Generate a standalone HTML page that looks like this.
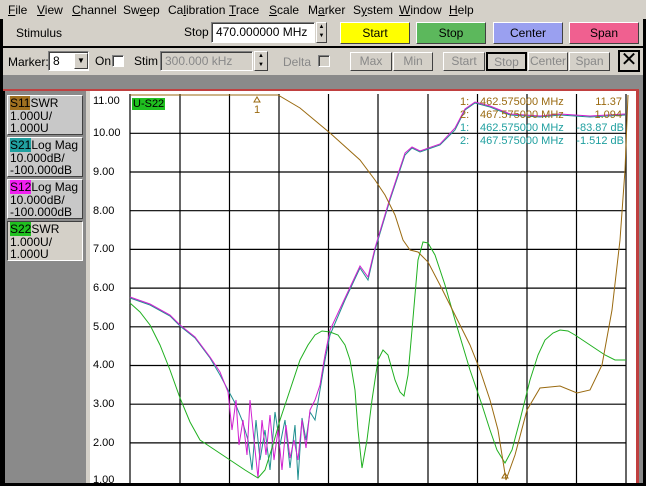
<!DOCTYPE html>
<html><head><style>
*{margin:0;padding:0;box-sizing:border-box}
body{width:646px;height:486px;background:#000;position:relative;overflow:hidden;font-family:"Liberation Sans",sans-serif;font-size:12px;color:#000}
.a{position:absolute}
.menu{left:0;top:0;width:646px;height:19px;background:#d4d0c8}
.menu span{position:absolute;top:3px}
.btn{position:absolute;border:1px solid;border-color:#fff #404040 #404040 #fff;text-align:center;font-size:12px}
.dis{color:#888}
.inp{position:absolute;background:#fff;border:1px solid;border-color:#808080 #fff #fff #808080;box-shadow:inset 1px 1px 0 #404040}
.lbl{position:absolute;width:76px;height:40px;background:#c8c8c8;border:1px solid;border-color:#fff #404040 #404040 #fff;font-size:12px;line-height:12.5px;padding:1px 0 0 2px;white-space:nowrap}
.yl{position:absolute;left:93px;font-size:11px}
.rd{position:absolute;font-size:11px;line-height:13px}
</style></head><body>
<div class="a menu">
<span style="left:8px"><u>F</u>ile</span><span style="left:37px"><u>V</u>iew</span><span style="left:72px"><u>C</u>hannel</span><span style="left:123px">Sw<u>e</u>ep</span><span style="left:168px">Ca<u>l</u>ibration</span><span style="left:229px"><u>T</u>race</span><span style="left:269px"><u>S</u>cale</span><span style="left:308px">M<u>a</u>rker</span><span style="left:353px">S<u>y</u>stem</span><span style="left:399px"><u>W</u>indow</span><span style="left:449px"><u>H</u>elp</span>
</div>
<div class="a" style="left:3px;top:19px;width:640px;height:27px;background:#d4d0c8"></div>
<div class="a" style="left:16px;top:26px">Stimulus</div>
<div class="a" style="left:184px;top:25px">Stop</div>
<div class="inp" style="left:211px;top:22px;width:104px;height:21px;padding:2px 4px">470.000000 MHz</div>
<div class="btn" style="left:316px;top:22px;width:11px;height:21px;font-size:6px;line-height:9px">▲<br>▼</div>
<div class="btn" style="left:340px;top:22px;width:70px;height:22px;background:#ffff00;line-height:20px">Start</div>
<div class="btn" style="left:416px;top:22px;width:70px;height:22px;background:#5cb85c;line-height:20px">Stop</div>
<div class="btn" style="left:493px;top:22px;width:70px;height:22px;background:#9aa0f0;line-height:20px">Center</div>
<div class="btn" style="left:569px;top:22px;width:70px;height:22px;background:#f06090;line-height:20px">Span</div>
<div class="a" style="left:3px;top:48px;width:640px;height:27px;background:#d4d0c8"></div>
<div class="a" style="left:8px;top:55px">Marker:</div>
<div class="inp" style="left:48px;top:51px;width:41px;height:20px;padding:2px 4px">8</div>
<div class="btn" style="left:74px;top:53px;width:14px;height:16px;font-size:8px;line-height:14px;background:#d4d0c8">▼</div>
<div class="a" style="left:95px;top:54px">On</div>
<div class="inp" style="left:112px;top:55px;width:12px;height:12px"></div>
<div class="a" style="left:134px;top:54px">Stim</div>
<div class="inp dis" style="left:160px;top:51px;width:93px;height:20px;padding:2px 4px;background:#d4d0c8">300.000 kHz</div>
<div class="btn" style="left:254px;top:51px;width:14px;height:20px;font-size:6px;line-height:9px;background:#d4d0c8">▲<br>▼</div>
<div class="a dis" style="left:283px;top:55px">Delta</div>
<div class="inp" style="left:318px;top:55px;width:12px;height:12px;background:#d4d0c8"></div>
<div class="btn dis" style="left:350px;top:52px;width:42px;height:19px;background:#d4d0c8;line-height:17px">Max</div>
<div class="btn dis" style="left:393px;top:52px;width:40px;height:19px;background:#d4d0c8;line-height:17px">Min</div>
<div class="btn dis" style="left:443px;top:52px;width:42px;height:19px;background:#d4d0c8;line-height:17px">Start</div>
<div class="btn dis" style="left:486px;top:52px;width:41px;height:19px;background:#d4d0c8;line-height:17px;border:2px solid #000">Stop</div>
<div class="btn dis" style="left:528px;top:52px;width:40px;height:19px;background:#d4d0c8;line-height:17px">Center</div>
<div class="btn dis" style="left:569px;top:52px;width:41px;height:19px;background:#d4d0c8;line-height:17px">Span</div>
<div class="a" style="left:618px;top:50px;width:22px;height:22px;border:2px solid #000;background:#d4d0c8;font-size:20px;line-height:17px;text-align:center">✕</div>
<div class="a" style="left:3px;top:75px;width:640px;height:14px;background:#8a8a8a"></div>
<div class="a" style="left:3px;top:89px;width:637px;height:2px;background:#c04040"></div>
<div class="a" style="left:5px;top:91px;width:82px;height:392px;background:#8a8a8a"></div>
<div class="a" style="left:86px;top:91px;width:4px;height:392px;background:#d4d0c8"></div>
<div class="lbl" style="left:7px;top:95px"><span style="background:#a07020">S11</span>SWR<br>1.000U/<br>1.000U</div>
<div class="lbl" style="left:7px;top:137px"><span style="background:#20a0a0">S21</span>Log Mag<br>10.000dB/<br>-100.000dB</div>
<div class="lbl" style="left:7px;top:179px"><span style="background:#f020f0">S12</span>Log Mag<br>10.000dB/<br>-100.000dB</div>
<div class="lbl" style="left:7px;top:221px;border-color:#404040 #fff #fff #404040;background:#d4d0c8"><span style="background:#20c020">S22</span>SWR<br>1.000U/<br>1.000U</div>
<div class="a" style="left:90px;top:91px;width:546px;height:392px;background:#fff"></div>
<div class="a" style="left:636px;top:89px;width:3px;height:394px;background:#c04040"></div>
<div class="a" style="left:639px;top:89px;width:4px;height:394px;background:#8a8a8a"></div>
<svg class="a" style="left:0;top:0" width="646" height="486">
<g stroke="#000" stroke-width="1.2" fill="none">
<path d="M130 94V483M180 94V483M229.5 94V483M279 94V483M328.5 94V483M378 94V483M428 94V483M477.5 94V483M527 94V483M576.5 94V483M626 94V483"/>
<path d="M130 133.3H626M130 172H626M130 210.7H626M130 249.4H626M130 288.1H626M130 326.8H626M130 365.5H626M130 404.2H626M130 442.9H626"/>
</g>
<g fill="none" stroke-width="1">
<polyline stroke="#209090" points="130,298 150,305 170,316 180,326 195,338 210,358 220,375 228,390 235,403 242,420 248,440 252,470 256,420 260,460 265,430 270,470 275,412 280,445 285,420 290,468 295,425 298,480 302,418 306,440 310,412 315,420 320,390 325,360 330,335 345,300 360,268 368,280 375,250 390,200 405,155 412,148 420,152 440,145 455,130 465,110 475,103 490,107 510,115 540,117 560,115 590,117 625,115"/>
<polyline stroke="#d020d0" points="130,297 150,304 170,315 180,325 195,337 210,357 220,372 228,392 232,430 236,400 239,445 243,420 247,455 250,400 254,440 258,478 262,420 266,455 270,415 274,460 278,430 282,470 286,425 290,458 294,440 298,460 302,420 306,448 310,410 315,400 320,385 325,355 330,330 345,298 360,266 368,277 375,248 390,198 405,153 412,147 420,151 440,144 455,128 465,109 475,102 490,106 510,114 540,116 560,114 590,116 625,114"/>
<polyline stroke="#20b020" points="130,303 140,312 150,325 160,345 170,370 180,398 190,422 200,440 215,450 230,460 245,470 258,478 265,470 272,448 280,420 290,390 300,360 308,345 315,335 322,331 330,332 338,335 345,345 350,360 355,390 358,430 362,468 367,440 372,400 378,360 383,350 388,355 395,380 400,392 404,396 408,375 412,330 418,260 423,242 428,243 435,255 445,285 455,320 470,370 482,405 490,430 497,450 505,463 512,450 520,420 530,380 538,355 545,340 553,333 560,330 568,331 575,335 590,345 605,355 615,360 626,360"/>
<polyline stroke="#9a6a10" points="130,95 278,95 300,108 330,133 360,160 375,180 385,195 395,215 403,240 410,250 418,252 428,262 440,285 455,315 470,345 480,370 490,400 498,430 506,480 515,455 527,410 540,388 560,386 577,393 590,390 602,365 612,310 620,240 625,170 628,95"/>
<path d="M254 102l3-5 3 5z M502 478l3-5 3 5z" stroke="#9a6a10" fill="none"/>
</g>
</svg>
<div class="a" style="left:132px;top:98px;background:#20c020;font-size:11px;padding:0 1px;line-height:12px">U-S22</div>
<div class="a" style="left:254px;top:104px;font-size:11px;color:#9a6a10">1</div>
<div class="yl" style="top:95px">11.00</div><div class="yl" style="top:127px">10.00</div><div class="yl" style="top:166px">9.00</div><div class="yl" style="top:205px">8.00</div><div class="yl" style="top:243px">7.00</div><div class="yl" style="top:282px">6.00</div><div class="yl" style="top:321px">5.00</div><div class="yl" style="top:359px">4.00</div><div class="yl" style="top:398px">3.00</div><div class="yl" style="top:437px">2.00</div><div class="yl" style="top:474px">1.00</div>
<div class="rd" style="left:460px;top:96px;color:#9a6a10">1:<br>2:</div>
<div class="rd" style="left:460px;top:122px;color:#20a0a0">1:<br>2:</div>
<div class="rd" style="left:480px;top:96px;color:#9a6a10">462.575000 MHz<br>467.575000 MHz</div>
<div class="rd" style="left:480px;top:122px;color:#20a0a0">462.575000 MHz<br>467.575000 MHz</div>
<div class="rd" style="left:560px;top:96px;width:62px;text-align:right;color:#9a6a10">11.37<br>1.094</div>
<div class="rd" style="left:560px;top:122px;width:64px;text-align:right;color:#20a0a0">-83.87 dB<br>-1.512 dB</div>
</body></html>
